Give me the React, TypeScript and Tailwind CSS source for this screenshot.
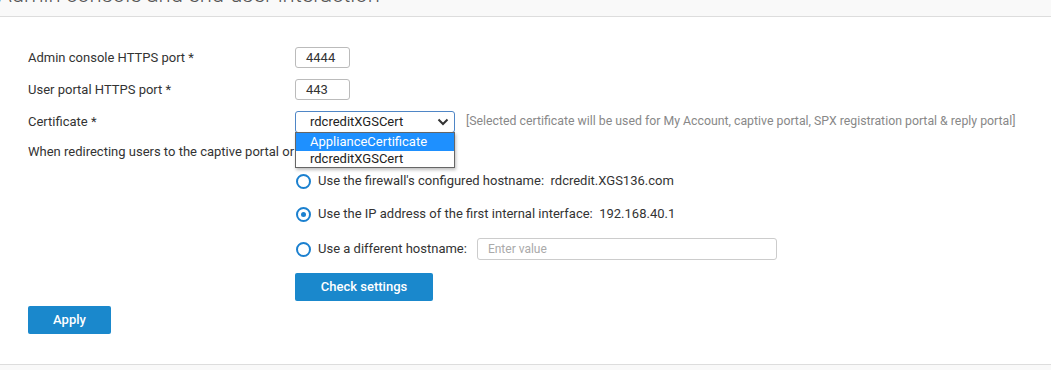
import React from "react";

const Radio = ({ checked }: { checked?: boolean }) => (
  <span className="relative flex h-[15px] w-[15px] shrink-0 items-center justify-center rounded-full border-2 border-[#1b80cf] bg-white">
    {checked && <span className="h-[5px] w-[5px] rounded-full bg-[#1b80cf]" />}
  </span>
);

export default function App() {
  return (
    <div className="relative h-[370px] w-[1051px] overflow-hidden bg-white text-[13px] text-[#333]" style={{ fontFamily: "Roboto, 'Liberation Sans', sans-serif" }}>
      <div className="h-[17px] overflow-hidden border-b border-[#dddddd] bg-[#f9f9f9]">
        <div className="-ml-[2px] -mt-[16px] whitespace-nowrap text-[22px] leading-[22px] font-light text-[#555]">Admin console and end-user interaction</div>
      </div>

      <div className="pl-[28px] pt-[30px]">
        <div className="flex h-[21px] items-center">
          <div className="w-[267px]">Admin console HTTPS port *</div>
          <div className="flex h-[21px] w-[55px] items-center rounded-[3px] border border-[#bbb] pl-[10px] text-[13px] text-[#333]">4444</div>
        </div>
        <div className="mt-[11px] flex h-[21px] items-center">
          <div className="w-[267px]">User portal HTTPS port *</div>
          <div className="flex h-[21px] w-[55px] items-center rounded-[3px] border border-[#bbb] pl-[10px] text-[13px] text-[#333]">443</div>
        </div>
        <div className="mt-[11px] flex h-[21px] items-center">
          <div className="w-[267px]">Certificate *</div>
          <div className="relative">
            <div className="flex h-[22px] w-[160px] items-center justify-between rounded-[3px] border border-[#4f86c6] pl-[14px] pr-[5px] text-[#222]">
              <span>rdcreditXGSCert</span>
              <svg width="12" height="8" viewBox="0 0 12 8"><path d="M1.5 1.5 L6 6 L10.5 1.5" fill="none" stroke="#333" strokeWidth="2" /></svg>
            </div>
            <div className="absolute left-0 top-[21px] z-10 w-[160px] border border-[#666] bg-white shadow-[1px_2px_3px_rgba(0,0,0,0.25)]">
              <div className="flex h-[18px] items-center bg-[#1e90ff] pl-[14px] text-white">ApplianceCertificate</div>
              <div className="flex h-[16px] items-center pl-[14px] text-[#222]">rdcreditXGSCert</div>
            </div>
          </div>
          <div className="ml-[11px] whitespace-nowrap text-[12.3px] text-[#888]">[Selected certificate will be used for My Account, captive portal, SPX registration portal &amp; reply portal]</div>
        </div>
        <div className="mt-[10px] flex h-[20px] w-[267px] items-center overflow-hidden whitespace-nowrap">When redirecting users to the captive portal or block page, use:</div>

        <div className="ml-[268px]">
          <div className="mt-[9px] flex h-[20px] items-center gap-[7px]">
            <Radio />
            <span>Use the firewall's configured hostname:&nbsp; rdcredit.XGS136.com</span>
          </div>
          <div className="mt-[13px] flex h-[20px] items-center gap-[7px]">
            <Radio checked />
            <span>Use the IP address of the first internal interface:&nbsp; 192.168.40.1</span>
          </div>
          <div className="mt-[14px] flex h-[22px] items-center gap-[7px]">
            <Radio />
            <span>Use a different hostname:</span>
            <div className="ml-[3px] flex h-[22px] w-[300px] items-center rounded-[3px] border border-[#ccc] pl-[10px] text-[12px] text-[#aaa]">Enter value</div>
          </div>
          <button className="-ml-px mt-[13px] h-[28px] w-[138px] rounded-[2px] bg-[#1a88cc] text-[13px] font-medium text-white">Check settings</button>
        </div>
        <button className="mt-[5px] block h-[28px] w-[83px] rounded-[2px] bg-[#1a88cc] text-[13px] font-medium text-white">Apply</button>
      </div>

      <div className="absolute bottom-0 left-0 h-[6px] w-full border-t border-[#dddddd] bg-[#f9f9f9]" />
    </div>
  );
}
